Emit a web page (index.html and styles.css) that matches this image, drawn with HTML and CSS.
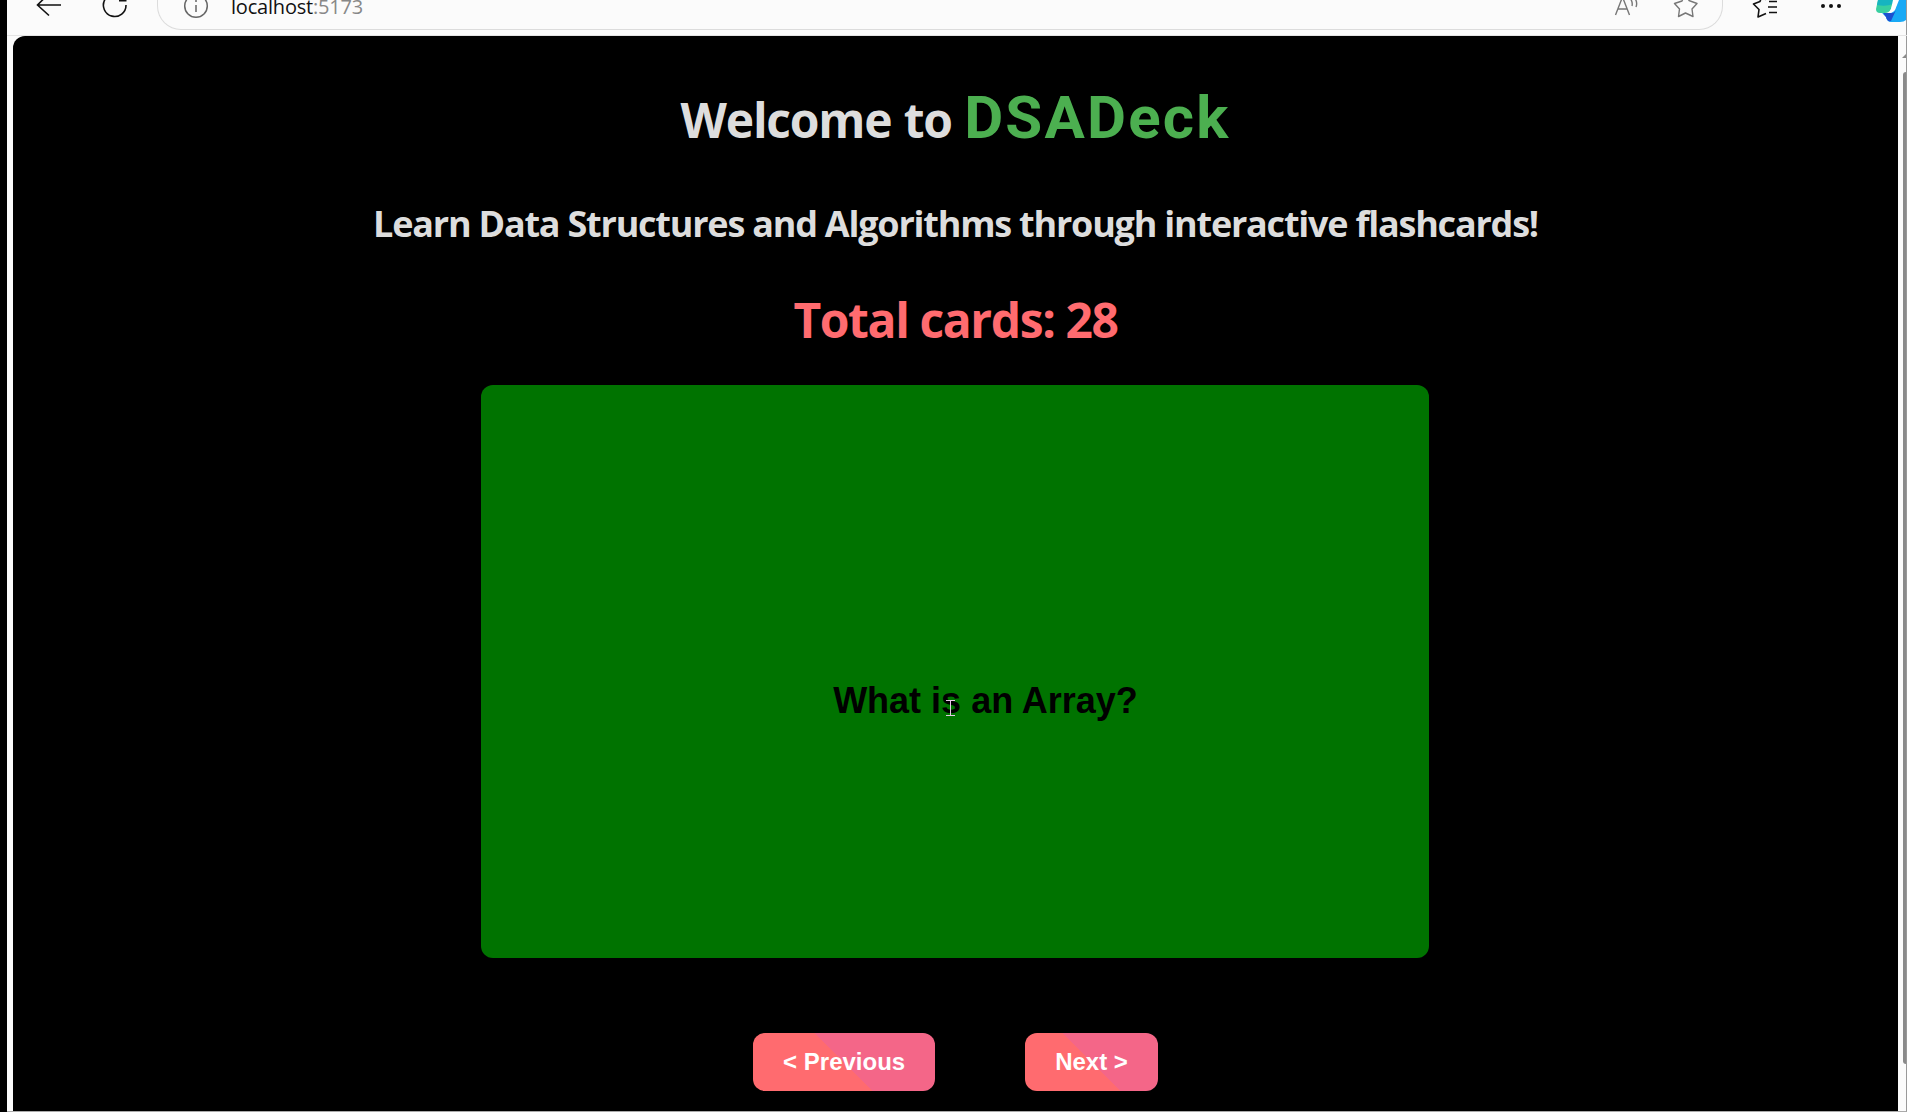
FILE: index.html
```html
<!DOCTYPE html>
<html lang="en">
<head>
<meta charset="utf-8">
<title>DSADeck</title>
<link rel="stylesheet" href="styles.css">
</head>
<body>
<div class="window">
  <header class="toolbar">
    <svg class="nav-icons" width="150" height="35" viewBox="7 0 150 35" fill="none" stroke="#111" stroke-width="1.6">
      <path d="M61 5H37.5M49 -6.500L37.500 5L49 15.500"/>
      <path d="M126 5A11.300 11.300 0 1 1 122.500 -3M126.500 0.600H119"/>
    </svg>
    <div class="address">
      <svg width="26" height="30" viewBox="0 0 26 30" fill="none" stroke="#666" stroke-width="1.5">
        <circle cx="13" cy="6" r="11.300"/><path d="M13 5V12M13 0V2"/>
      </svg>
      <span class="url">localhost<span class="port">:5173</span></span>
      <svg class="address-icons" width="90" height="30" viewBox="1610 0 90 30" fill="none" stroke="#777" stroke-width="1.4">
        <path d="M1615.500 15L1622.500 -3L1629.500 15M1618 9H1627M1630 -2Q1633 2 1632 6M1634 -3Q1638 2 1636 7"/>
        <path d="M1685.500 -7L1689 0.500L1697 3.500L1692 9L1693 16.500L1685.500 13L1678.500 16.500L1679.500 9L1674.500 3.500L1682 1Z" stroke-linejoin="round"/>
      </svg>
    </div>
    <svg class="menu-icons" width="184" height="35" viewBox="1723 0 184 35">
      <path d="M1766 0L1763 -7L1760 1.500L1753.500 4L1759 9.500L1758 17L1766 13.500M1769 1.500H1777M1768 7H1777M1769 12.500H1777" fill="none" stroke="#111" stroke-width="1.600" stroke-linejoin="round"/>
      <g fill="#111"><circle cx="1823" cy="6" r="2"/><circle cx="1831" cy="6" r="2"/><circle cx="1839" cy="6" r="2"/></g>
      <path d="M1882 13Q1892 15 1895 9L1899 -3H1906V20Q1904 22 1900 22H1891Q1887 22 1886 17Z" fill="#18a9f5"/>
      <path d="M1883 13H1893Q1895 12 1896 10L1891 21Q1887 22 1886 17Z" fill="#1d4fd0"/>
      <path d="M1878 0H1894L1891 9Q1889 13 1885 13H1880Q1876 13 1876 9Z" fill="#38cfa0"/>
      <path d="M1878 0H1894L1893 4Q1886 7 1877 5Z" fill="#16b4c0"/>
      <path d="M1893 0H1899L1895 10Q1893 13 1888 13Q1890 12 1891 9Z" fill="#fff"/>
    </svg>
  </header>
  <div class="viewport">
    <main class="page">
      <h1 class="title">Welcome to <span class="brand">DSADeck</span></h1>
      <h2 class="subtitle">Learn Data Structures and Algorithms through interactive flashcards!</h2>
      <p class="total">Total cards: 28</p>
      <section class="card">
        <span class="question">What is an Array?</span>
        <svg class="cursor" width="9" height="16" viewBox="0 0 9 16"><path d="M0 .5H9M4.500 0V16M0 15.500H9" stroke="#e6c8e6"/></svg>
      </section>
      <nav class="controls">
        <button class="btn">&lt; Previous</button>
        <button class="btn">Next &gt;</button>
      </nav>
    </main>
    <aside class="scrollbar">
      <svg width="4" height="4" viewBox="0 0 4 4"><path d="M0 4L4 0V4Z" fill="#8a8a8a"/></svg>
      <div class="thumb"></div>
    </aside>
  </div>
</div>
</body>
</html>
```
FILE: styles.css
```css
* { box-sizing: border-box; }
body {
  margin: 0;
  height: 1112px;
  overflow: hidden;
  background: #000;
  font-family: "Segoe UI", "Open Sans", "Noto Sans", sans-serif;
}
.window {
  height: 1112px;
  margin-left: 7px;
  background: #fbfbfb;
  border-right: 1px solid #999;
  border-bottom: 1px solid #aaa;
  display: flex;
  flex-direction: column;
}
.toolbar {
  height: 36px;
  flex: none;
  display: flex;
  border-bottom: 1px solid #e4e4e4;
  margin-right: -1px;
}
.toolbar svg { flex: none; display: block; }
.address {
  flex: 1;
  height: 30px;
  display: flex;
  padding-left: 25px;
  padding-right: 22px;
  border: solid #dcdcdc;
  border-width: 0 1.5px 1.5px;
  border-radius: 0 0 24px 24px;
}
.url {
  margin-left: 22px;
  margin-top: -4px;
  font-size: 20px;
  line-height: 21px;
  letter-spacing: -0.2px;
  color: #111;
}
.port { color: #888; }
.address-icons { margin-left: auto; }
.viewport { flex: 1; display: flex; min-height: 0; padding-left: 6px; }
.page {
  width: 1885px;
  background: #000;
  border-top-left-radius: 12px;
  display: flex;
  flex-direction: column;
  align-items: center;
  color: #ddd;
  overflow: hidden;
}
.title, .subtitle, .total { margin: 0; font-weight: 700; white-space: nowrap; }
.title { margin-top: 42px; font-size: 48px; line-height: 80px; letter-spacing: -1.2px; word-spacing: 1px; }
.brand {
  font-family: Roboto, sans-serif;
  font-size: 60px;
  letter-spacing: 2.2px;
  color: #4caf50;
}
.subtitle { margin-top: 40px; font-size: 36px; line-height: 48px; letter-spacing: -1.22px; }
.total { margin-top: 40px; font-size: 48px; line-height: 64px; letter-spacing: -1.4px; color: #ff6b6f; }
.card {
  position: relative;
  width: 948px;
  height: 573px;
  flex: none;
  margin-top: 33px;
  margin-right: 1px;
  padding: 59px 0 0 61px;
  border-radius: 12px;
  background: #007300;
  color: #000;
  display: flex;
  align-items: center;
  justify-content: center;
}
.question { font: 700 36px/42px "Liberation Sans", Arial, sans-serif; }
.cursor { position: absolute; left: 465px; top: 315px; }
.controls { display: flex; gap: 90px; margin-top: 75px; }
.btn {
  height: 58px;
  padding: 0 30px;
  border: 0;
  border-radius: 12px;
  background: linear-gradient(45deg, #ff6b6f 50%, #f46688 50%);
  color: #fff;
  font: 700 24px/28px "Liberation Sans", Arial, sans-serif;
}
.scrollbar {
  width: 8px;
  flex: none;
  display: flex;
  flex-direction: column;
  align-items: flex-end;
  padding-top: 18px;
}
.scrollbar svg { display: block; }
.thumb {
  width: 3px;
  height: 992px;
  margin-top: 14px;
  background: #8a8a8a;
  border-radius: 3px 0 0 3px;
}
```
